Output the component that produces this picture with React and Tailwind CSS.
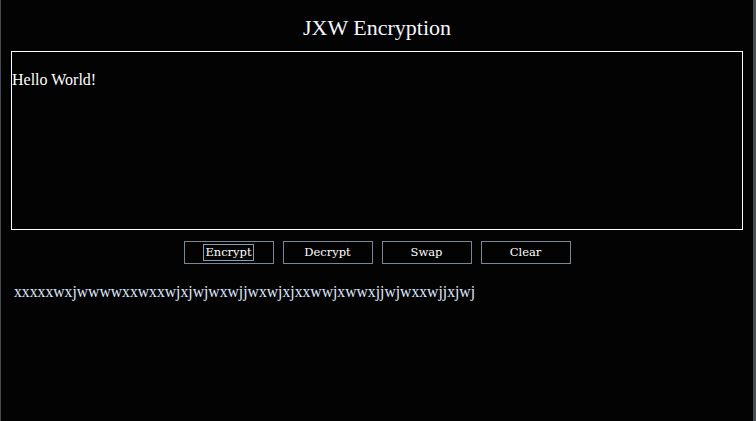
import { useState } from 'react';

const serif = { fontFamily: '"Liberation Serif", "Times New Roman", serif' };

export default function App() {
  // Estado del texto de entrada y salida
  const [input, setInput] = useState('Hello World!');
  const [output] = useState('xxxxxwxjwwwwxxwxxwjxjwjwxwjjwxwjxjxxwwjxwwxjjwjwxxwjjxjwj');

  const buttons = ['Encrypt', 'Decrypt', 'Swap', 'Clear'];

  return (
    <div className="flex h-[421px] w-[756px] bg-[#030303] text-white" style={serif}>
      <div className="w-px bg-[#454a50]" />
      <div className="flex flex-1 flex-col px-[10px]">
        <h1 className="pt-[15px] text-center text-[22px] leading-[26px] text-[#f4f6ff]">JXW Encryption</h1>

        {/* Campo de texto */}
        <div className="mt-[10px] h-[179px] w-full border border-white pt-[19px]">
          <textarea
            value={input}
            onChange={(e) => setInput(e.target.value)}
            className="h-full w-full resize-none bg-transparent p-0 text-[16px] leading-[18px] text-white outline-none"
            style={serif}
          />
        </div>

        {/* Botones */}
        <div className="mt-[11px] flex justify-center gap-[9px]">
          {buttons.map((b, i) => (
            <button
              key={b}
              type="button"
              className="flex h-[23px] w-[90px] items-center justify-center border border-[#7b8794] text-[11.5px] text-white"
              style={{ fontFamily: '"DejaVu Serif", serif' }}
            >
              <span
                className={
                  i === 0
                    ? 'flex h-[17px] items-center border border-[#8a9bb0] px-px'
                    : 'flex h-[17px] items-center'
                }
              >
                {b}
              </span>
            </button>
          ))}
        </div>

        {/* Resultado */}
        <p className="mt-[19px] pl-[3px] text-[15.7px] leading-[18px] text-[#dfe9ff]">{output}</p>
      </div>
      <div className="w-[3px] bg-[#4a4f56]" />
    </div>
  );
}
